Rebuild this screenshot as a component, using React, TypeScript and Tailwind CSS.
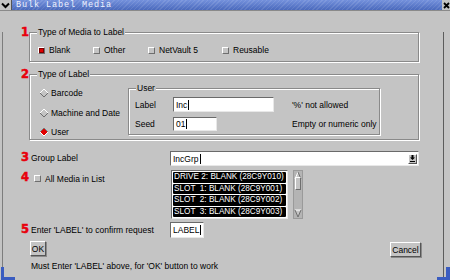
import React from 'react';

// Bulk Label Media dialog (old Motif/Java look)

const BG = 'bg-[#c4c4c4]';

function Num({ n }: { n: string }) {
  return (
    <span className="w-[10px] shrink-0 font-['DejaVu_Sans',sans-serif] text-[11.5px] font-bold leading-none text-[#e8000c] [-webkit-text-stroke:0.5px_#e8000c]">
      {n}
    </span>
  );
}

function Check({ on = false }: { on?: boolean }) {
  return (
    <span
      className={`inline-block w-[7px] h-[7px] shrink-0 border border-t-white border-l-white border-b-[#6e6e6e] border-r-[#6e6e6e] ${
        on ? 'bg-[#e00000] shadow-[inset_0_0_0_1px_#7a0000]' : 'bg-[#c4c4c4]'
      }`}
    />
  );
}

function Diamond({ on = false }: { on?: boolean }) {
  return (
    <svg width="8" height="8" viewBox="0 0 8 8" className="shrink-0">
      <polygon points="4,0 8,4 4,8 0,4" fill={on ? '#e00000' : '#c4c4c4'} />
      <polyline points="0,4 4,0 8,4" fill="none" stroke={on ? '#7a7a7a' : '#ffffff'} strokeWidth="1" />
      <polyline points="0,4 4,8 8,4" fill="none" stroke={on ? '#ffffff' : '#6e6e6e'} strokeWidth="1" />
    </svg>
  );
}

function Box({ legend, className, children }: { legend: string; className: string; children?: React.ReactNode }) {
  return (
    <div className={`relative border border-[#8a8a8a] shadow-[inset_1px_1px_0_#fff,1px_1px_0_#fff] ${className}`}>
      <span className={`absolute left-[7px] -top-[6px] px-[1px] leading-[10px] ${BG}`}>{legend}</span>
      {children}
    </div>
  );
}

function Caret() {
  return <span className="ml-[1px] inline-block w-[1px] h-[10px] bg-black" />;
}

function Field({ text, className }: { text: string; className: string }) {
  return (
    <div
      className={`flex items-center bg-white border border-t-[#6a6a6a] border-l-[#6a6a6a] border-b-[#e8e8e8] border-r-[#e8e8e8] pl-[2px] ${className}`}
    >
      <span className="leading-[10px]">{text}</span>
      <Caret />
    </div>
  );
}

function Button({ label, className }: { label: string; className: string }) {
  return (
    <div
      className={`flex items-center justify-center border border-t-white border-l-white border-b-[#555] border-r-[#555] shadow-[1px_1px_0_#8a8a8a] leading-[10px] ${className}`}
    >
      {label}
    </div>
  );
}

const MEDIA = ['DRIVE 2: BLANK (28C9Y010)', 'SLOT  1: BLANK (28C9Y001)', 'SLOT  2: BLANK (28C9Y002)', 'SLOT  3: BLANK (28C9Y003)'];

export default function App() {
  return (
    <div className={`relative w-[450px] h-[280px] overflow-hidden ${BG} font-['Liberation_Sans',Arial,sans-serif] text-[8.5px] text-black`}>
      {/* title bar */}
      <div className="flex h-[11px] border-b border-[#8a8a8a]">
        <div className="flex w-[12px] items-center justify-center border-r border-[#555] bg-[#c4c4c4]">
          <svg width="9" height="7" viewBox="0 0 9 7">
            <path d="M1 1.5 L4.5 5 L8 1.5" stroke="black" strokeWidth="2" fill="none" />
          </svg>
        </div>
        <div className="flex flex-1 items-center bg-[repeating-linear-gradient(135deg,rgba(255,255,255,0.10)_0_1px,transparent_1px_3px),linear-gradient(180deg,#7491dc,#4a69bc)] pl-[4px]">
          <span className="font-['Liberation_Mono',monospace] text-[8.5px] leading-[10px] tracking-[0.9px] text-[#eef2ff]">
            Bulk Label Media
          </span>
        </div>
        <div className="flex w-[8px] items-center justify-center bg-[#c4c4c4]">
          <svg width="7" height="7" viewBox="0 0 7 7">
            <path d="M1 1L6 6M6 1L1 6" stroke="black" strokeWidth="1.8" />
          </svg>
        </div>
      </div>

      {/* window body */}
      <div className="ml-[2px] w-[442px] h-[265px] border-l border-r border-b border-l-[#7d7d7d] border-r-[#5c5c5c] border-b-[#5c5c5c]">
        {/* 1 */}
        <div className="mt-[21px] flex pl-[18px]">
          <div className="-mt-[5px] w-[8px]">
            <Num n="1" />
          </div>
          <Box legend="Type of Media to Label" className="w-[390px] h-[30px]">
            <div className="flex items-center pl-[8px] pt-[12px] leading-[10px]">
              <div className="flex w-[55px] items-center gap-[4px]">
                <Check on />
                <span>Blank</span>
              </div>
              <div className="flex w-[55px] items-center gap-[4px]">
                <Check />
                <span>Other</span>
              </div>
              <div className="flex w-[74px] items-center gap-[4px]">
                <Check />
                <span>NetVault 5</span>
              </div>
              <div className="flex items-center gap-[4px]">
                <Check />
                <span>Reusable</span>
              </div>
            </div>
          </Box>
        </div>

        {/* 2 */}
        <div className="mt-[12px] flex pl-[18px]">
          <div className="-mt-[5px] w-[8px]">
            <Num n="2" />
          </div>
          <Box legend="Type of Label" className="w-[390px] h-[66px]">
            <div className="flex">
              <div className="flex w-[98px] flex-col pl-[10px] pt-[13px] leading-[10px]">
                <div className="flex items-center gap-[3px]">
                  <Diamond />
                  <span>Barcode</span>
                </div>
                <div className="mt-[10px] flex items-center gap-[3px]">
                  <Diamond />
                  <span>Machine and Date</span>
                </div>
                <div className="mt-[9px] flex items-center gap-[3px]">
                  <Diamond on />
                  <span>User</span>
                </div>
              </div>
              <Box legend="User" className="mt-[13px] w-[252px] h-[47px]">
                <div className="flex items-center pl-[6px] pt-[8px]">
                  <span className="w-[38px] leading-[10px]">Label</span>
                  <Field text="Inc" className="w-[101px] h-[15px]" />
                  <span className="ml-[18px] leading-[10px]">'%' not allowed</span>
                </div>
                <div className="mt-[5px] flex items-center pl-[6px]">
                  <span className="w-[38px] leading-[10px]">Seed</span>
                  <Field text="01" className="w-[44px] h-[14px]" />
                  <span className="ml-[75px] leading-[10px]">Empty or numeric only</span>
                </div>
              </Box>
            </div>
          </Box>
        </div>

        {/* 3 */}
        <div className="mt-[11px] flex items-start pl-[18px]">
          <div className="mt-[1px] flex h-[11px] w-[149px] items-center">
            <Num n="3" />
            <span className="leading-[10px]">Group Label</span>
          </div>
          <div className="flex h-[15px] w-[249px] items-center justify-between bg-white border border-t-[#6a6a6a] border-l-[#6a6a6a] border-b-[#e8e8e8] border-r-[#e8e8e8] pl-[2px] pr-[1px]">
            <div className="flex items-center">
              <span className="leading-[10px]">IncGrp</span>
              <Caret />
            </div>
            <div className="flex h-[10px] w-[9px] items-center justify-center bg-[#c4c4c4] border border-t-white border-l-white border-b-[#555] border-r-[#555]">
              <svg width="5" height="7" viewBox="0 0 5 7">
                <path d="M1.5 0h2v2.5h1.5L2.5 5 0 2.5h1.5z" fill="black" />
                <rect x="0" y="6" width="5" height="1" fill="black" />
              </svg>
            </div>
          </div>
        </div>

        {/* 4 */}
        <div className="mt-[4px] flex items-start pl-[18px]">
          <div className="mt-[3px] flex h-[11px] w-[150px] items-center">
            <span className="w-[13px]">
              <Num n="4" />
            </span>
            <Check />
            <span className="ml-[4px] leading-[10px]">All Media in List</span>
          </div>
          <div className="flex h-[49px] w-[117px] flex-col gap-[1px] bg-white border border-t-[#6a6a6a] border-l-[#6a6a6a] border-b-[#e8e8e8] border-r-[#e8e8e8] p-[1px]">
            {MEDIA.map((m) => (
              <div key={m} className="h-[10.5px] whitespace-pre bg-black px-[1px] text-[8.2px] leading-[10.5px] text-white rounded-[1px]">
                {m}
              </div>
            ))}
          </div>
          <div className="ml-[5px] flex h-[49px] w-[10px] flex-col justify-between bg-[#b4b4b4] border border-[#9a9a9a]">
            <svg width="8" height="9" viewBox="0 0 8 9">
              <polygon points="4,1 7,8 1,8" fill="#c4c4c4" />
              <polyline points="1,8 4,1" stroke="#fff" fill="none" />
              <polyline points="4,1 7,8 1,8" stroke="#6e6e6e" fill="none" />
            </svg>
            <div className="-mt-[22px] mx-[1px] h-[13px] bg-[#c4c4c4] border border-t-white border-l-white border-b-[#6e6e6e] border-r-[#6e6e6e]" />
            <svg width="8" height="9" viewBox="0 0 8 9">
              <polygon points="1,1 7,1 4,8" fill="#c4c4c4" />
              <polyline points="1,1 7,1" stroke="#fff" fill="none" />
              <polyline points="7,1 4,8 1,1" stroke="#6e6e6e" fill="none" />
            </svg>
          </div>
        </div>

        {/* 5 */}
        <div className="mt-[3px] flex items-start pl-[18px]">
          <div className="mt-[2px] flex h-[11px] w-[149px] items-center">
            <Num n="5" />
            <span className="leading-[10px]">Enter 'LABEL' to confirm request</span>
          </div>
          <Field text="LABEL" className="w-[34px] h-[16px]" />
        </div>

        {/* buttons */}
        <div className="mt-[3px] flex items-start justify-between pl-[27px] pr-[22px]">
          <Button label="OK" className="w-[16px] h-[15px]" />
          <Button label="Cancel" className="mt-[1px] w-[31px] h-[15px]" />
        </div>
        <div className="mt-[4px] pl-[28px] leading-[10px]">Must Enter 'LABEL' above, for 'OK' button to work</div>
      </div>

      {/* blue resize corners */}
      <div className="absolute left-[1px] bottom-0 h-[13px] w-[14px] border-l-[3px] border-b-[3px] border-[#3a5cc0]" />
      <div className="absolute right-0 bottom-0 h-[13px] w-[13px] border-r-[4px] border-b-[3px] border-[#3a5cc0]" />
    </div>
  );
}
